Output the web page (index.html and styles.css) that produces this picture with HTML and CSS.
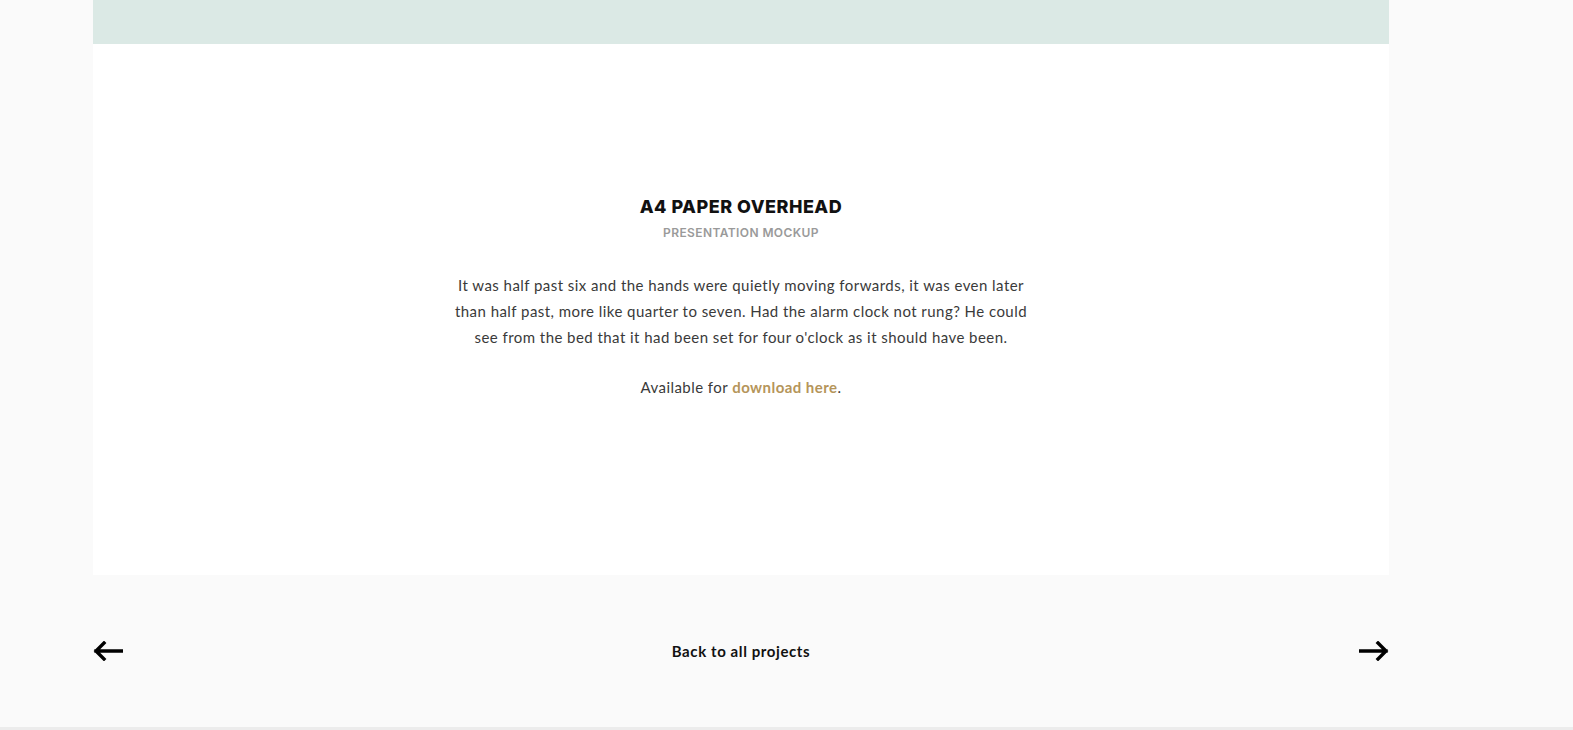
FILE: index.html
```html
<!DOCTYPE html>
<html lang="en">
<head>
<meta charset="utf-8">
<title>A4 Paper Overhead</title>
<link rel="stylesheet" href="styles.css">
</head>
<body>
<div class="page">
  <div class="hero"></div>
  <section class="details">
    <h1 class="title">A4 PAPER OVERHEAD</h1>
    <p class="subtitle">PRESENTATION MOCKUP</p>
    <p class="desc">It was half past six and the hands were quietly moving forwards, it was even later than half past, more like quarter to seven. Had the alarm clock not rung? He could see from the bed that it had been set for four o'clock as it should have been.</p>
    <p class="avail">Available for <a href="#" class="dl">download here</a>.</p>
  </section>
  <nav class="pager">
    <a href="#" class="arrow" aria-label="Previous">
      <svg width="30" height="20" viewBox="0 0 30 20"><path d="M29 10H3M11 2L3 10L11 18" fill="none" stroke="#000" stroke-width="3.4" stroke-linecap="square"/></svg>
    </a>
    <a href="#" class="back">Back to all projects</a>
    <a href="#" class="arrow" aria-label="Next">
      <svg width="30" height="20" viewBox="0 0 30 20"><path d="M1 10H27M19 2L27 10L19 18" fill="none" stroke="#000" stroke-width="3.4" stroke-linecap="square"/></svg>
    </a>
  </nav>
</div>
<div class="bottom-line"></div>
</body>
</html>
```
FILE: styles.css
```css
html, body {
  margin: 0;
  padding: 0;
  background: #fafafa;
}
body {
  font-family: "Lato", "Open Sans", sans-serif;
  color: #333;
}
.page {
  width: 1296px;
  margin-left: 93px;
}
.hero {
  height: 44px;
  background: #dbe9e5;
}
.details {
  background: #fff;
  height: 531px;
  box-sizing: border-box;
  padding-top: 151px;
  display: flex;
  flex-direction: column;
  align-items: center;
  text-align: center;
}
.title {
  margin: 0;
  font-family: "Inter", sans-serif;
  font-weight: 800;
  font-size: 18px;
  line-height: 24px;
  color: #111;
  letter-spacing: 0.5px;
}
.subtitle {
  margin: 6px 0 0;
  font-family: "Inter", sans-serif;
  font-weight: 600;
  font-size: 12px;
  line-height: 16px;
  color: #9a9a9a;
  letter-spacing: 0.4px;
}
.desc {
  margin: 31px 0 0;
  width: 580px;
  font-size: 15px;
  line-height: 26px;
  letter-spacing: 0.45px;
  color: #3a3a3a;
}
.avail {
  margin: 24px 0 0;
  font-size: 15px;
  line-height: 26px;
  letter-spacing: 0.45px;
  color: #3a3a3a;
}
.dl {
  color: #b5955a;
  font-weight: 700;
  text-decoration: none;
}
.pager {
  height: 152px;
  display: flex;
  align-items: center;
  justify-content: space-between;
}
.arrow {
  display: flex;
  width: 30px;
  height: 20px;
}
.back {
  font-weight: 700;
  font-size: 15px;
  letter-spacing: 0.6px;
  color: #111;
  text-decoration: none;
}
.bottom-line {
  height: 3px;
  background: #ececec;
}
```
